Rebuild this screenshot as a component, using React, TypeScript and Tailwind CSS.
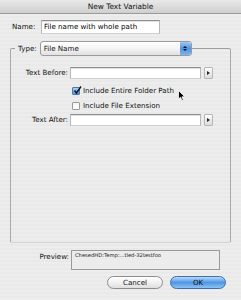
import type { FC } from 'react';

const font = "font-['DejaVu_Sans','Liberation_Sans',sans-serif]";

const ArrowButton: FC = () => (
    <div className="ml-[3px] flex h-[12px] w-[9px] items-center justify-center rounded-[1px] border border-[#b5b5b5] bg-gradient-to-b from-[#fdfdfd] to-[#dcdcdc]">
        <span className="block h-0 w-0 border-y-[2px] border-l-[3px] border-y-transparent border-l-[#222]" />
    </div>
);

const CheckBox: FC<{ checked?: boolean; label: string }> = ({ checked, label }) => (
    <div className="flex h-[9px] items-center gap-[3px]">
        {checked ? (
            <div className="relative h-[8px] w-[8px] rounded-[1px] border border-[#4a78b0] bg-gradient-to-b from-[#a9d0f5] to-[#4f97e0]">
                <svg className="absolute -top-[2px] left-[0px]" width="9" height="9" viewBox="0 0 9 9">
                    <path d="M1.5 4.5 L3.5 7 L8 0.5" stroke="#111" strokeWidth="1.4" fill="none" />
                </svg>
            </div>
        ) : (
            <div className="h-[8px] w-[8px] rounded-[1px] border border-[#9a9a9a] bg-gradient-to-b from-[#f4f4f4] to-[#ffffff]" />
        )}
        <span className="text-[7.1px] leading-none text-[#111]">{label}</span>
    </div>
);

const Field: FC<{ className?: string; value?: string }> = ({ className, value }) => (
    <div
        className={`${className} flex items-center border border-t-[#8e8e8e] border-x-[#b8b8b8] border-b-[#d0d0d0] bg-white shadow-[inset_0_1px_0_#e2e2e2]`}
    >
        {value && <span className="pl-[2px] text-[7.1px] leading-none text-black">{value}</span>}
    </div>
);

export default function App() {
    return (
        <div
            className={`relative h-[300px] w-[241px] overflow-hidden bg-[repeating-linear-gradient(0deg,#ededed_0px,#ededed_2px,#e9e9e9_2px,#e9e9e9_4px)] leading-none ${font}`}
        >
            {/* title bar */}
            <div className="flex h-[14px] items-center justify-center border-b border-[#9a9a9a] bg-gradient-to-b from-[#e9e9e9] to-[#cfcfcf]">
                <span className="text-[7.4px] text-[#111]">New Text Variable</span>
            </div>

            {/* name */}
            <div className="mt-[6px] flex items-center pl-[12px]">
                <span className="w-[29px] text-[7.1px] text-[#111]">Name:</span>
                <Field className="h-[14px] w-[119px]" value="File name with whole path" />
            </div>

            {/* group box */}
            <div className="mx-[10px] mt-[14px] h-[195px] rounded-[2px] border border-[#a9a9a9] border-b-[#d4d4d4] border-t-[#9d9d9d]">
                <div className="-mt-[8px] flex items-center">
                    <div className="ml-[4px] flex h-[15px] items-center bg-[#ebebeb] pr-[3px] pl-[3px]">
                        <span className="text-[7.1px] text-[#111]">Type:</span>
                    </div>
                    <div className="flex h-[15px] w-[152px] items-center justify-between rounded-[3px] border border-[#9b9b9b] bg-gradient-to-b from-[#ffffff] via-[#f3f3f3] to-[#e1e1e1] pl-[3px]">
                        <span className="text-[7.1px] text-[#111]">File Name</span>
                        <div className="flex h-[13px] w-[11px] flex-col items-center justify-center gap-[1px] rounded-r-[3px] bg-gradient-to-b from-[#9cc8f4] via-[#4f95e2] to-[#7ab6f0]">
                            <span className="block h-0 w-0 border-x-[2px] border-b-[2px] border-x-transparent border-b-[#111]" />
                            <span className="block h-0 w-0 border-x-[2px] border-t-[2px] border-x-transparent border-t-[#111]" />
                        </div>
                    </div>
                    <div className="ml-[5px] h-[15px] flex-1 bg-transparent" />
                </div>

                {/* text before */}
                <div className="mt-[11px] flex items-center">
                    <span className="w-[59px] pr-[2px] text-right text-[7.1px] text-[#111]">Text Before:</span>
                    <Field className="h-[12px] w-[131px]" />
                    <ArrowButton />
                </div>

                <div className="mt-[7px] ml-[61px] flex flex-col gap-[6px]">
                    <CheckBox checked label="Include Entire Folder Path" />
                    <CheckBox label="Include File Extension" />
                </div>

                {/* text after */}
                <div className="mt-[4px] flex items-center">
                    <span className="w-[59px] pr-[2px] text-right text-[7.1px] text-[#111]">Text After:</span>
                    <Field className="h-[12px] w-[131px]" />
                    <ArrowButton />
                </div>
            </div>

            {/* preview */}
            <div className="mt-[7px] flex items-start">
                <span className="mt-[3px] w-[71px] pr-[2px] text-right text-[7.1px] text-[#111]">Preview:</span>
                <div className="h-[20px] w-[149px] border border-[#9a9a9a] bg-[#ececec] pt-[2px] pl-[3px] text-[5.2px] text-[#222]">
                    ChesedHD:Temp:...tled-32testfoo
                </div>
            </div>

            {/* buttons */}
            <div className="mt-[6px] flex justify-end gap-[7px] pr-[15px]">
                <div className="flex h-[13px] w-[56px] items-center justify-center rounded-full border border-[#8d8d8d] bg-gradient-to-b from-[#ffffff] via-[#f1f1f1] to-[#dedede] text-[7.1px] text-[#111]">
                    Cancel
                </div>
                <div className="flex h-[13px] w-[56px] items-center justify-center rounded-full border border-[#3f6ea8] bg-gradient-to-b from-[#b7dafa] via-[#4e96e4] to-[#8cc3f5] text-[7.1px] text-[#111]">
                    OK
                </div>
            </div>

            {/* mouse cursor */}
            <svg className="absolute top-[90px] left-[178px]" width="8" height="12" viewBox="0 0 8 12">
                <path d="M0.5 0.5 L0.5 9 L2.6 7.2 L4 10.6 L5.4 10 L4 6.8 L6.8 6.8 Z" fill="#000" stroke="#fff" strokeWidth="0.8" />
            </svg>
        </div>
    );
}
